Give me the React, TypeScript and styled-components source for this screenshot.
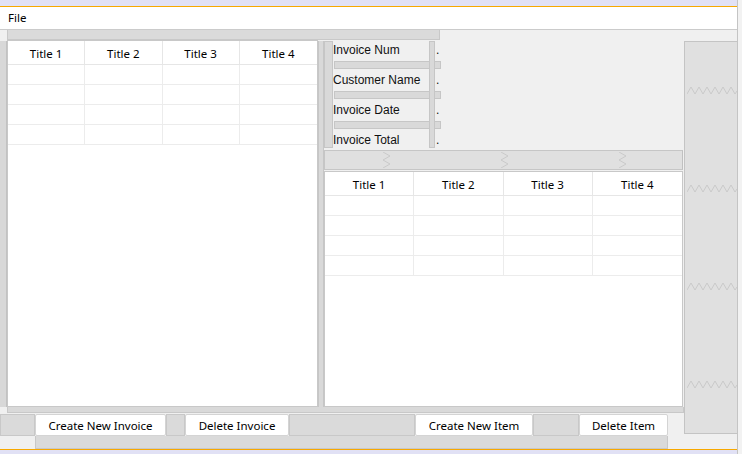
import React from 'react'
import styled, { createGlobalStyle } from 'styled-components'

const GlobalStyle = createGlobalStyle`
  html, body {
    margin: 0;
    padding: 0;
    background: #f0f0f0;
  }
  * {
    box-sizing: border-box;
  }
`

const titles = ['Title 1', 'Title 2', 'Title 3', 'Title 4']
const fields = ['Invoice Num', 'Customer Name', 'Invoice Date', 'Invoice Total']

function HZigzag() {
  return (
    <svg width="50" height="9" viewBox="0 0 50 9">
      <polyline
        points="0,8 4,1 8,8 12,1 16,8 20,1 24,8 28,1 32,8 36,1 40,8 44,1 48,8 50,5"
        fill="none"
        stroke="#cacaca"
        strokeWidth="1"
      />
    </svg>
  )
}

function VZigzag() {
  return (
    <svg width="9" height="16" viewBox="0 0 9 16">
      <polyline points="1,0 8,4 1,8 8,12 1,16" fill="none" stroke="#cacaca" strokeWidth="1" />
    </svg>
  )
}

function Table() {
  return (
    <TableBox>
      <HeaderRow>
        {titles.map(t => (
          <HeaderCell key={t}>{t}</HeaderCell>
        ))}
      </HeaderRow>
      {[0, 1, 2, 3].map(r => (
        <BodyRow key={r}>
          {titles.map(t => (
            <BodyCell key={t} />
          ))}
        </BodyRow>
      ))}
    </TableBox>
  )
}

export default function App() {
  return (
    <>
      <GlobalStyle />
      <Page>
        <Window>
          <TitleStrip />
          <MenuBar>
            <MenuItem>File</MenuItem>
          </MenuBar>
          <Body>
            <LeftArea>
              <TopRow>
                <Bar width={433} />
              </TopRow>
              <Middle>
                <EdgeBar />
                <LeftTableWrap>
                  <Table />
                </LeftTableWrap>
                <Divider />
                <RightColumn>
                  <Form>
                    <NarrowBar />
                    {fields.map((f, i) => (
                      <React.Fragment key={f}>
                        <FieldLabel row={i * 2 + 1}>{f}</FieldLabel>
                        <Dot row={i * 2 + 1}>.</Dot>
                        {i < fields.length - 1 && <GapBar row={i * 2 + 2} />}
                      </React.Fragment>
                    ))}
                    <FormBar />
                  </Form>
                  <ZigBar>
                    <VZigzag />
                    <VZigzag />
                    <VZigzag />
                  </ZigBar>
                  <RightTableWrap>
                    <Table />
                  </RightTableWrap>
                </RightColumn>
              </Middle>
              <HBar />
              <ButtonRow>
                <Filler width={35} />
                <Button width={131}>Create New Invoice</Button>
                <Filler width={19} />
                <Button width={104}>Delete Invoice</Button>
                <Filler width={126} />
                <Button width={118}>Create New Item</Button>
                <Filler width={46} />
                <Button width={89}>Delete Item</Button>
              </ButtonRow>
              <BottomBar />
            </LeftArea>
            <SidePanel>
              <HZigzag />
              <HZigzag />
              <HZigzag />
              <HZigzag />
            </SidePanel>
          </Body>
          <BottomStrip />
        </Window>
        <Outside />
      </Page>
    </>
  )
}

const Page = styled.div`
  display: flex;
  width: 742px;
  height: 454px;
  overflow: hidden;
  background: #f0f0f0;
`

const Window = styled.div`
  width: 738px;
  height: 454px;
  border-right: 1px solid #c4c4c4;
  display: flex;
  flex-direction: column;
  background: #f0f0f0;
`

const Outside = styled.div`
  flex: 1;
  background: #f2f2f2;
`

const TitleStrip = styled.div`
  height: 7px;
  background: #e1e1f5;
  border-bottom: 1px solid #f7a800;
`

const MenuBar = styled.div`
  height: 23px;
  background: #ffffff;
  border-bottom: 1px solid #cbcbcb;
  display: flex;
  align-items: center;
  padding-left: 8px;
`

const MenuItem = styled.span`
  font-family: 'Noto Sans', 'Open Sans', sans-serif;
  font-size: 11.5px;
  color: #000;
  margin-top: -1px;
`

const Body = styled.div`
  height: 419px;
  display: flex;
`

const LeftArea = styled.div`
  width: 684px;
  display: flex;
  flex-direction: column;
`

const TopRow = styled.div`
  height: 10px;
  padding-left: 7px;
`

const Bar = styled.div<{ width: number }>`
  width: ${p => p.width}px;
  height: 10px;
  background: #dadada;
  border: 1px solid #c8c8c8;
  border-top: none;
`

const Middle = styled.div`
  height: 368px;
  display: flex;
`

const EdgeBar = styled.div`
  width: 7px;
  margin-top: 1px;
  background: #d8d8d8;
  border-right: 1px solid #c2c2c2;
`

const LeftTableWrap = styled.div`
  width: 311px;
  display: flex;
`

const Divider = styled.div`
  width: 6px;
  margin-top: 1px;
  background: #d9d9d9;
  border-left: 1px solid #c6c6c6;
  border-right: 1px solid #c6c6c6;
`

const RightColumn = styled.div`
  width: 359px;
  display: flex;
  flex-direction: column;
`

const Form = styled.div`
  height: 110px;
  display: grid;
  grid-template-columns: 9px 96px 6px 6px 1fr;
  grid-template-rows: 20px 10px 20px 10px 20px 10px 20px;
`

const NarrowBar = styled.div`
  grid-column: 1;
  grid-row: 1 / 8;
  margin: 1px 0 2px 0;
  background: #d9d9d9;
  border: 1px solid #c6c6c6;
`

const FormBar = styled.div`
  grid-column: 3;
  grid-row: 1 / 8;
  margin: 1px 0 2px 0;
  background: #d9d9d9;
  border: 1px solid #c6c6c6;
  z-index: 1;
`

const FieldLabel = styled.div<{ row: number }>`
  grid-column: 2;
  grid-row: ${p => p.row};
  font-family: 'Liberation Sans', Arial, sans-serif;
  font-size: 12px;
  color: #111;
  display: flex;
  align-items: center;
  white-space: nowrap;
`

const Dot = styled.div<{ row: number }>`
  grid-column: 4 / 6;
  grid-row: ${p => p.row};
  padding-left: 1px;
  font-family: 'Liberation Sans', Arial, sans-serif;
  font-size: 12px;
  color: #111;
  display: flex;
  align-items: center;
`

const GapBar = styled.div<{ row: number }>`
  grid-column: 2 / 5;
  grid-row: ${p => p.row};
  margin: 1px 0 1px 1px;
  background: #d9d9d9;
  border: 1px solid #c6c6c6;
`

const ZigBar = styled.div`
  height: 20px;
  background: #e0e0e0;
  border: 1px solid #c6c6c6;
  border-right-color: #c0c0c0;
  display: flex;
  align-items: center;
  justify-content: space-around;
  padding-left: 2px;
`

const RightTableWrap = styled.div`
  flex: 1;
  margin-top: 1px;
  display: flex;
`

const TableBox = styled.div`
  flex: 1;
  background: #ffffff;
  border: 1px solid #c8c8c8;
  display: flex;
  flex-direction: column;
`

const HeaderRow = styled.div`
  height: 24px;
  display: grid;
  grid-template-columns: repeat(4, 1fr);
  border-bottom: 1px solid #e6e6e6;
`

const HeaderCell = styled.div`
  display: flex;
  align-items: center;
  justify-content: center;
  padding-top: 1px;
  font-family: 'Noto Sans', 'Open Sans', sans-serif;
  font-size: 11.5px;
  color: #000;
  border-right: 1px solid #e6e6e6;
  &:last-child {
    border-right: none;
  }
`

const BodyRow = styled.div`
  height: 20px;
  display: grid;
  grid-template-columns: repeat(4, 1fr);
  border-bottom: 1px solid #ececec;
`

const BodyCell = styled.div`
  border-right: 1px solid #ececec;
  &:last-child {
    border-right: none;
  }
`

const HBar = styled.div`
  height: 6px;
  margin-left: 7px;
  background: #d9d9d9;
  border: 1px solid #c8c8c8;
  border-top: none;
`

const ButtonRow = styled.div`
  height: 22px;
  margin-top: 1px;
  display: flex;
`

const Filler = styled.div<{ width: number }>`
  width: ${p => p.width}px;
  background: #dadada;
  border: 1px solid #c8c8c8;
`

const Button = styled.div<{ width: number }>`
  width: ${p => p.width}px;
  background: #ffffff;
  border: 1px solid #d4d4d4;
  border-radius: 2px;
  display: flex;
  align-items: center;
  justify-content: center;
  font-family: 'Noto Sans', 'Open Sans', sans-serif;
  font-size: 11.5px;
  color: #000;
`

const BottomBar = styled.div`
  height: 13px;
  margin-left: 35px;
  width: 633px;
  background: #dadada;
  border: 1px solid #c8c8c8;
  border-top: none;
`

const SidePanel = styled.div`
  width: 53px;
  margin-top: 11px;
  height: 393px;
  background: #e0e0e0;
  border: 1px solid #c4c4c4;
  border-right: none;
  display: flex;
  flex-direction: column;
  justify-content: space-around;
  align-items: flex-end;
  padding-left: 2px;
`

const BottomStrip = styled.div`
  flex: 1;
  background: #e1e1f5;
  border-top: 1px solid #f7a800;
`
